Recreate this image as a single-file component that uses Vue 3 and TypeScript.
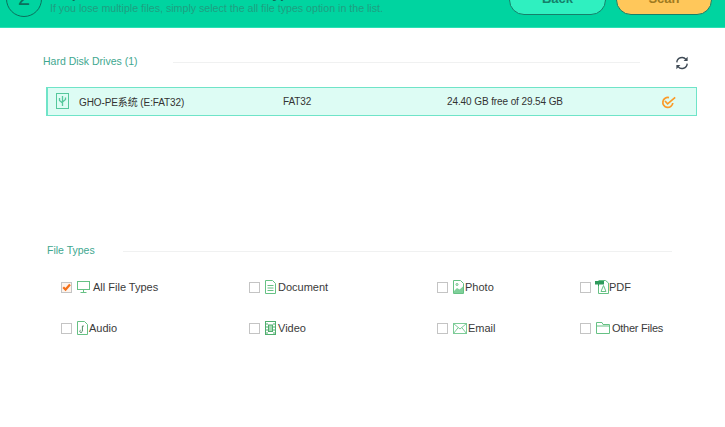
<script setup lang="ts">
interface FileType { label: string; icon: string; checked?: boolean; tight?: boolean }
const fileTypes: FileType[] = [
  { label: 'All File Types', icon: 'monitor', checked: true },
  { label: 'Document', icon: 'doc' },
  { label: 'Photo', icon: 'photo' },
  { label: 'PDF', icon: 'pdf' },
  { label: 'Audio', icon: 'audio' },
  { label: 'Video', icon: 'video' },
  { label: 'Email', icon: 'email' },
  { label: 'Other Files', icon: 'folder', tight: true },
]
</script>

<template>
  <div class="page">
    <header class="banner">
      <div class="step">2</div>
      <div class="intro">
        <div class="intro-title">Step 2: Select Location and File Types</div>
        <div class="intro-sub">If you lose multiple files, simply select the all file types option in the list.</div>
      </div>
      <div class="actions">
        <button class="btn back"><span>Back</span></button>
        <button class="btn scan"><span>Scan</span></button>
      </div>
    </header>

    <section class="drives">
      <div class="section-head">
        <span class="section-title">Hard Disk Drives (1)</span>
        <span class="rule rule-drives"></span>
        <svg class="refresh" width="14" height="14" viewBox="0 0 14 14" fill="none" stroke="#3f4a55" stroke-width="1.4">
          <path d="M1.8 6.4 A5.2 5.2 0 0 1 11 3.4" />
          <path d="M12.2 7.6 A5.2 5.2 0 0 1 3 10.6" />
          <path d="M12.6 0.8 V5 H8.6 Z" fill="#3f4a55" stroke="none" />
          <path d="M1.4 13.2 V9 H5.4 Z" fill="#3f4a55" stroke="none" />
        </svg>
      </div>
      <div class="drive-row">
        <svg class="usb" width="13" height="16" viewBox="0 0 13 16" fill="none" stroke="#55c89c">
          <rect x="0.5" y="0.5" width="12" height="15" />
          <path d="M6.5 3 V13 M3.5 5 V7.5 L6.5 10 M9.5 4.5 V6.5 L6.5 9" stroke-width="1.3" />
        </svg>
        <span class="drive-name">GHO-PE系统 (E:FAT32)</span>
        <span class="drive-fs">FAT32</span>
        <span class="drive-free">24.40 GB free of 29.54 GB</span>
        <svg class="drive-check" width="15" height="13" viewBox="0 0 15 13" fill="none" stroke="#fb9a28" stroke-width="1.7">
          <path d="M11.8 7 A5 5 0 1 1 8 1.6" />
          <path d="M4 5 L6.6 7.8 L14.2 1.4" />
        </svg>
      </div>
    </section>

    <section class="types">
      <div class="section-head">
        <span class="section-title">File Types</span>
        <span class="rule rule-types"></span>
      </div>
      <div class="type-grid">
        <label v-for="t in fileTypes" :key="t.label" class="type-item">
          <span class="box" :class="{ on: t.checked }">
            <svg v-if="t.checked" width="9" height="9" viewBox="0 0 9 9" fill="none" stroke="#f4701a" stroke-width="2.2">
              <path d="M1.2 4.2 L3.6 6.6 L8 1.6" />
            </svg>
          </span>
          <svg v-if="t.icon === 'monitor'" class="ic ic-monitor" width="13" height="12" viewBox="0 0 13 12" fill="none" stroke="#66c184">
            <rect x="0.5" y="0.5" width="12" height="8" /><path d="M6.5 8.5 V11 M3.5 11.5 H9.5" />
          </svg>
          <svg v-else-if="t.icon === 'doc'" class="ic ic-doc" width="11" height="14" viewBox="0 0 11 14" fill="none" stroke="#66c184">
            <path d="M0.5 0.5 H7.5 L10.5 3.5 V13.5 H0.5 Z M2.5 5.5 H8.5 M2.5 8 H8.5 M2.5 10.5 H8.5" />
          </svg>
          <svg v-else-if="t.icon === 'photo'" class="ic" width="11" height="14" viewBox="0 0 11 14" fill="none" stroke="#66c184">
            <path d="M0.5 0.5 H7.5 L10.5 3.5 V13.5 H0.5 Z" />
            <path d="M1 11 L4 8 L6.5 9.5 L10 6.5 V13 H1 Z" fill="#7fd09a" stroke="none" />
            <circle cx="4" cy="4.5" r="1" />
          </svg>
          <svg v-else-if="t.icon === 'pdf'" class="ic ic-pdf" width="14" height="14" viewBox="0 0 14 14" fill="none" stroke="#66c184">
            <path d="M3.5 4 V13.5 H13.5 V3 L10.5 0.5 H3.5" />
            <path d="M0 1 H9 V4.5 H4 V6 H3 V4.5 H0 Z" fill="#2f9a5b" stroke="none" />
            <path d="M6 11.5 L8.5 5.5 L11 11.5 Z" />
          </svg>
          <svg v-else-if="t.icon === 'audio'" class="ic" width="11" height="14" viewBox="0 0 11 14" fill="none" stroke="#66c184">
            <path d="M0.5 0.5 H7.5 L10.5 3.5 V13.5 H0.5 Z" />
            <path d="M6.8 5 H5.4 V10 M5.2 10.3 A1.2 1.2 0 1 1 3.6 9.2" stroke="#4f8a64" />
          </svg>
          <svg v-else-if="t.icon === 'video'" class="ic ic-video" width="11" height="14" viewBox="0 0 11 14" fill="none" stroke="#4fae6e">
            <rect x="0.5" y="0.5" width="10" height="13" />
            <rect x="3.5" y="4" width="4" height="6.5" fill="#a6dcb6" />
            <path d="M1 3 H3 M1 6 H3 M1 9 H3 M1 12 H3 M8 3 H10 M8 6 H10 M8 9 H10 M8 12 H10" />
          </svg>
          <svg v-else-if="t.icon === 'email'" class="ic ic-email" width="14" height="11" viewBox="0 0 14 11" fill="none" stroke="#7ccb97">
            <rect x="0.5" y="0.5" width="13" height="10" /><path d="M0.5 0.5 L7 6 L13.5 0.5 M0.5 10.5 L5.2 4.6 M13.5 10.5 L8.8 4.6" />
          </svg>
          <svg v-else class="ic ic-folder" width="14" height="12" viewBox="0 0 14 12" fill="none" stroke="#66c184">
            <path d="M0.5 3 V0.5 H6 L7 2.5 H13.5 V11.5 H0.5 Z M0.5 4 H13.5" />
          </svg>
          <span class="type-label" :class="{ tight: t.tight }">{{ t.label }}</span>
        </label>
      </div>
    </section>
  </div>
</template>

<style>
html, body { margin: 0; background: #fff; }
</style>

<style scoped>
.page {
  width: 725px;
  height: 427px;
  overflow: hidden;
  background: #fff;
  font-family: "Liberation Sans", "Noto Sans CJK SC", Arial, sans-serif;
  font-size: 11px;
  color: #3a3a3a;
}
.banner {
  height: 27px;
  border-bottom: 1px solid #2ae0b4;
  background: #00d4a0;
  display: flex;
  align-items: flex-end;
  overflow: hidden;
  padding: 0 13px 0 6px;
}
.step {
  flex: none;
  width: 34px;
  height: 34px;
  margin-bottom: 10px;
  border: 1px solid #0d6f5c;
  border-radius: 50%;
  text-align: center;
  line-height: 32px;
  font-size: 22px;
  color: #0d6f5c;
}
.intro {
  margin-left: 8px;
  margin-bottom: 12px;
  flex: 1;
  white-space: nowrap;
}
.intro-title {
  font-size: 14px;
  font-weight: 700;
  line-height: 14px;
  color: #0f6e5a;
}
.intro-sub {
  margin-top: 1px;
  font-size: 10.65px;
  line-height: 14px;
  color: #1f9f80;
}
.actions {
  display: flex;
  gap: 10px;
  margin-bottom: 12px;
}
.btn {
  width: 97px;
  height: 30px;
  padding: 0 0 4px;
  border: 1px solid #16806a;
  border-radius: 15px;
  font: 700 13px "Liberation Sans", Arial, sans-serif;
  color: #15806a;
}
.back { background: #2ff0c0; }
.scan { width: 96px; background: #ffc75a; color: #a07a20; }

.section-head {
  display: flex;
  align-items: center;
  height: 16px;
}
.drives {
  padding: 25px 0 0 43px;
  height: 197px;
  box-sizing: border-box;
}
.section-title {
  color: #3ea78f;
  font-size: 10.5px;
  line-height: 16px;
  white-space: nowrap;
}
.rule {
  display: block;
  height: 1px;
  background: #f0f1f1;
  margin-top: 3px;
}
.rule-drives { width: 467px; margin-left: 35px; }
.refresh { margin-left: 35px; margin-top: 3px; }
.drive-row {
  margin: 18px 0 0 3px;
  width: 651px;
  height: 29px;
  box-sizing: border-box;
  border: 1px solid #6fe4c8;
  border-left-width: 2px;
  background: #ddfcf4;
  display: flex;
  align-items: center;
  padding-left: 8px;
  color: #333;
  font-size: 10px;
  letter-spacing: -0.1px;
}
.usb { flex: none; margin-top: -1px; }
.drive-name { margin-left: 10px; width: 204px; white-space: nowrap; }
.drive-fs { width: 164px; }
.drive-free { width: 214px; white-space: nowrap; }
.drive-check { flex: none; margin-top: 1px; }

.types { padding: 0 0 0 47px; margin-top: 17px; }
.rule-types { width: 549px; margin-left: 28px; }
.type-grid {
  display: grid;
  grid-template-columns: 188px 188px 143px 1fr;
  grid-auto-rows: 41px;
  margin: 21px 0 0 14px;
}
.type-item {
  display: flex;
  align-items: center;
  height: 16px;
  color: #3a3a3a;
  font-size: 11px;
  white-space: nowrap;
}
.box {
  flex: none;
  width: 9px;
  height: 9px;
  border: 1px solid #c4c4c4;
  background: #fff;
  display: flex;
  align-items: center;
  justify-content: center;
  margin-right: 5px;
}
.box.on { background: #fdf3ec; }
.ic { flex: none; margin-right: 1px; }
.ic-monitor { margin-right: 3px; }
.ic-doc { margin-right: 2px; }
.ic-video { margin-right: 2px; }
.ic-email { margin-right: 1px; }
.ic-folder { margin-right: 2px; }
.ic-pdf { margin-left: -1px; margin-right: 0; }
.tight { letter-spacing: -0.25px; }
</style>
